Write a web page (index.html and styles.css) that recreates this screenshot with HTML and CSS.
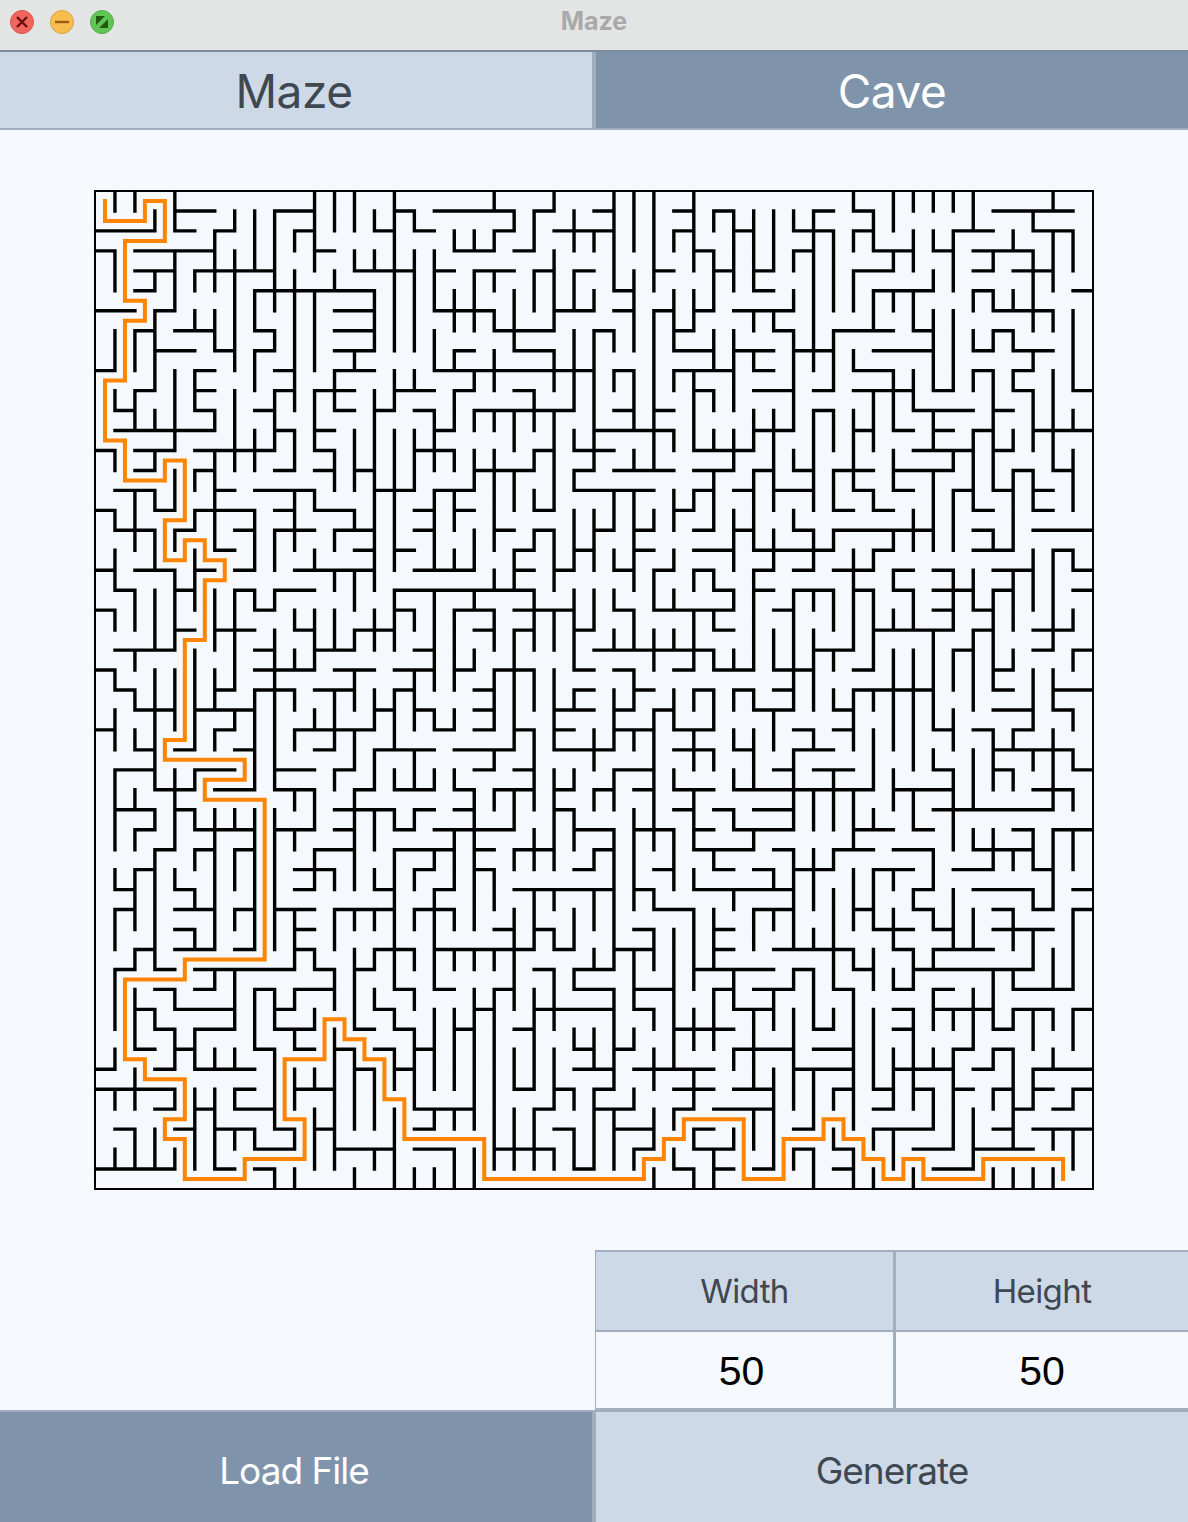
FILE: index.html
```html
<!DOCTYPE html>
<html lang="en">
<head>
  <meta charset="UTF-8" />
  <title>Maze</title>
  <link rel="stylesheet" href="styles.css">
</head>
<body>

  <!-- Title bar -->
  <div class="titlebar">
    <div class="lights">
      <svg class="light" viewBox="0 0 24 24"><circle class="light-close" cx="12" cy="12" r="11.5"/><path d="M7 7L17 17M17 7L7 17" stroke="#6a0e08" stroke-width="2.4" fill="none"/></svg>
      <svg class="light" viewBox="0 0 24 24"><circle class="light-min" cx="12" cy="12" r="11.5"/><path d="M5 12H19" stroke="#995b15" stroke-width="2.4" fill="none"/></svg>
      <svg class="light" viewBox="0 0 24 24"><circle class="light-max" cx="12" cy="12" r="11.5"/><path d="M6 6H15L6 15ZM18 18H9L18 9Z" fill="#1f5a12"/></svg>
    </div>
    <div class="title">Maze</div>
  </div>

  <!-- Tabs -->
  <div class="tabs">
    <div class="tab light-btn">Maze</div>
    <div class="tab dark-btn">Cave</div>
  </div>

  <!-- Maze -->
  <div class="maze-area">
    <svg class="maze" viewBox="-0.05 -0.05 50.1 50.1">
      <rect class="maze-frame" x="0" y="0" width="50" height="50"/>
      <path class="walls" d="
M4 1H6M9 1H11M15 1H16M17 1H21M22 1H23M25 1H26M29 1H30M31 1H32M36 1H37M38 1H39M45 1H49
M0 2H3M4 2H5M6 2H7M10 2H11M14 2H15M16 2H17M20 2H21M23 2H26M29 2H30M32 2H33M35 2H37M38 2H39M43 2H45M47 2H49
M0 3H1M2 3H6M11 3H12M18 3H20M21 3H22M30 3H31M35 3H36M39 3H41M42 3H43M44 3H47
M2 4H4M5 4H9M13 4H16M17 4H18M19 4H21M22 4H23M24 4H25M28 4H29M31 4H32M33 4H34M38 4H40M44 4H45M46 4H48
M2 5H3M8 5H14M26 5H27M33 5H34M39 5H42M44 5H45M49 5H50
M0 6H2M3 6H4M12 6H14M17 6H20M23 6H25M26 6H27M28 6H29M30 6H31M32 6H35M45 6H48
M2 7H3M4 7H6M8 7H9M12 7H14M20 7H23M25 7H26M29 7H30M34 7H35M37 7H40M41 7H42M45 7H46
M3 8H5M6 8H7M8 8H9M12 8H14M18 8H19M21 8H23M29 8H31M32 8H34M35 8H37M39 8H42M44 8H45M46 8H48
M0 9H1M5 9H6M9 9H10M12 9H14M17 9H25M26 9H27M29 9H32M33 9H34M38 9H40M44 9H45M46 9H47
M2 10H3M5 10H6M9 10H10M11 10H13M15 10H17M18 10H19M21 10H22M30 10H31M33 10H35M36 10H37M38 10H41M42 10H43M46 10H47M49 10H50
M1 11H2M5 11H6M8 11H9M12 11H13M14 11H15M16 11H17M19 11H24M26 11H27M28 11H29M36 11H37M41 11H44M45 11H46
M1 12H6M9 12H10M11 12H12M17 12H18M25 12H29M33 12H35M38 12H39M40 12H41M42 12H43M44 12H45M47 12H50
M0 13H1M2 13H4M5 13H9M11 13H12M16 13H18M22 13H23M24 13H26M30 13H33M41 13H44M45 13H46
M2 14H3M5 14H6M9 14H10M11 14H12M13 14H14M19 14H22M24 14H25M26 14H29M30 14H32M33 14H34M35 14H36M37 14H39M40 14H43M46 14H47M48 14H49
M1 15H3M6 15H7M8 15H11M14 15H16M17 15H19M24 15H28M30 15H31M32 15H33M34 15H36M38 15H39M40 15H41M43 15H44M45 15H46M47 15H48
M0 16H1M3 16H4M5 16H8M9 16H10M11 16H13M16 16H17M18 16H19M22 16H23M29 16H30M37 16H38M39 16H40M44 16H45M47 16H48
M1 17H3M4 17H5M7 17H8M9 17H11M12 17H14M16 17H17M20 17H21M22 17H23M25 17H26M27 17H28M30 17H31M32 17H33M35 17H36M37 17H42M44 17H45M47 17H50
M6 18H7M13 18H14M15 18H16M21 18H22M24 18H25M27 18H28M30 18H32M33 18H37M39 18H40M44 18H46M48 18H49
M0 19H1M2 19H4M5 19H6M7 19H8M10 19H14M16 19H19M21 19H22M23 19H24M26 19H27M28 19H29M30 19H31M33 19H34M35 19H36M37 19H39M40 19H41M42 19H43M45 19H47M49 19H50
M1 20H2M4 20H5M7 20H8M9 20H11M15 20H22M31 20H32M33 20H34M35 20H37M38 20H39M40 20H41M42 20H44M45 20H46M49 20H50
M0 21H1M8 21H9M15 21H16M18 21H20M21 21H24M26 21H27M28 21H32M34 21H35M42 21H43M44 21H45
M4 22H5M6 22H8M10 22H11M13 22H15M19 22H20M21 22H22M24 22H25M31 22H32M39 22H43M44 22H45M47 22H49
M1 23H4M8 23H9M11 23H13M16 23H17M25 23H31M36 23H38M43 23H44M47 23H48M49 23H50
M0 24H1M8 24H11M12 24H14M15 24H17M18 24H19M20 24H22M24 24H25M26 24H27M29 24H30M31 24H33M34 24H36M38 24H39M45 24H46
M1 25H2M6 25H7M8 25H10M11 25H13M15 25H16M19 25H20M24 25H25M27 25H28M30 25H31M32 25H33M34 25H35M38 25H42M45 25H46M48 25H50
M2 26H4M5 26H8M14 26H15M16 26H17M19 26H20M23 26H25M26 26H27M28 26H29M33 26H35M37 26H38M45 26H47M48 26H49
M0 27H1M6 27H7M10 27H14M17 27H18M19 27H20M21 27H22M23 27H24M26 27H28M29 27H31M35 27H36M37 27H38M42 27H43M44 27H45M46 27H47
M2 28H3M4 28H5M7 28H8M11 28H12M14 28H17M18 28H21M23 28H26M29 28H31M32 28H33M35 28H37M45 28H49
M1 29H3M5 29H7M9 29H11M12 29H13M19 29H20M21 29H22M26 29H28M34 29H35M36 29H38M42 29H43M45 29H46M49 29H50
M3 30H5M6 30H8M9 30H11M13 30H14M15 30H17M18 30H19M20 30H22M23 30H24M25 30H26M27 30H28M29 30H31M32 30H39M40 30H43M47 30H49
M1 31H3M4 31H5M12 31H15M16 31H17M18 31H19M23 31H24M29 31H30M31 31H32M33 31H35M42 31H48
M2 32H3M5 32H8M9 32H11M12 32H13M15 32H16M17 32H21M24 32H26M27 32H29M30 32H31M32 32H35M38 32H40M41 32H42M46 32H47M48 32H50
M3 33H4M5 33H6M7 33H8M11 33H13M15 33H18M19 33H20M21 33H23M25 33H26M30 33H33M34 33H35M37 33H39M40 33H42M44 33H47
M2 34H3M10 34H12M16 34H17M19 34H20M24 34H25M28 34H29M31 34H32M33 34H34M35 34H37M39 34H41M43 34H45M47 34H48
M1 35H2M4 35H5M10 35H11M14 35H15M17 35H18M21 35H26M27 35H28M30 35H35M41 35H42M44 35H47M49 35H50
M1 36H2M4 36H6M7 36H8M9 36H11M12 36H15M16 36H18M28 36H30M33 36H35M38 36H39M41 36H42M45 36H46M47 36H48M49 36H50
M4 37H5M10 37H11M20 37H21M22 37H23M27 37H28M31 37H32M39 37H41M42 37H43M45 37H48
M2 38H3M4 38H6M7 38H8M10 38H11M14 38H16M17 38H22M23 38H24M26 38H28M31 38H32M34 38H38M40 38H41M42 38H45
M1 39H2M3 39H4M5 39H10M11 39H12M13 39H14M22 39H23M24 39H26M30 39H34M35 39H36M38 39H39M41 39H47
M3 40H4M5 40H6M8 40H9M10 40H12M15 40H16M17 40H18M20 40H21M24 40H26M27 40H29M31 40H32M33 40H35M37 40H38M40 40H41M42 40H43M46 40H49
M2 41H3M4 41H7M9 41H10M14 41H15M19 41H20M22 41H26M27 41H28M32 41H34M40 41H41M42 41H45M46 41H48M49 41H50
M3 42H4M5 42H7M9 42H11M13 42H14M15 42H16M18 42H19M21 42H22M29 42H32M36 42H37M40 42H41M45 42H46
M2 43H3M4 43H5M8 43H9M10 43H11M12 43H13M14 43H15M16 43H17M24 43H25M26 43H27M32 43H35M36 43H38M43 43H44M45 43H46
M0 44H1M3 44H4M5 44H8M13 44H14M15 44H16M24 44H26M27 44H31M35 44H38M40 44H43M44 44H45M47 44H50
M0 45H4M7 45H8M10 45H12M21 45H22M23 45H24M25 45H26M29 45H31M32 45H34M37 45H38M39 45H40M41 45H42M43 45H44M45 45H46M47 45H48M49 45H50
M3 46H4M5 46H6M7 46H9M16 46H19M22 46H23M25 46H27M29 46H30M31 46H34M39 46H40M46 46H47M48 46H49
M1 47H2M4 47H5M6 47H8M9 47H10M11 47H12M16 47H17M23 47H24M26 47H28M30 47H31M35 47H36M39 47H42M45 47H46M47 47H50
M8 48H10M12 48H15M16 48H18M20 48H23M27 48H28M30 48H32M35 48H36M37 48H38M41 48H43M44 48H47
M0 49H4M6 49H7M8 49H9M24 49H25M29 49H30M31 49H32M33 49H34M37 49H38M42 49H44
M1 0V1M1 3V5M1 7V9M1 10V11M1 13V14M1 16V17M1 18V20M1 21V22M1 24V25M1 26V28M1 29V33M1 34V35M1 36V38M1 39V42M1 43V44M1 45V46M1 48V49
M2 0V1M2 7V9M2 10V12M2 15V18M2 20V22M2 23V24M2 25V26M2 27V28M2 30V31M2 32V33M2 34V37M2 38V39M2 40V43M2 44V46M2 47V49
M3 1V2M3 4V5M3 6V10M3 11V12M3 13V14M3 15V16M3 17V19M3 20V23M3 24V30M3 31V32M3 33V39M3 41V42M3 47V49
M4 0V2M4 3V6M4 9V13M4 14V16M4 17V18M4 19V23M4 24V27M4 29V33M4 34V35M4 40V41M4 42V44M4 45V46M4 48V49
M5 4V5M5 6V7M5 9V11M5 14V15M5 16V17M5 18V21M5 23V28M5 29V30M5 31V32M5 33V34M5 35V36M5 37V38M5 42V44M5 45V49
M6 2V5M6 6V8M6 11V12M6 13V18M6 20V23M6 24V26M6 27V28M6 31V38M6 39V40M6 43V44M6 45V49
M7 1V2M7 3V9M7 10V14M7 20V25M7 26V27M7 31V32M7 33V35M7 36V37M7 39V42M7 43V44M7 45V46M7 47V48
M8 1V4M8 5V7M8 8V10M8 12V14M8 16V19M8 20V21M8 25V30M8 31V38M8 40V43M8 47V48
M9 1V6M9 7V8M9 10V13M9 17V19M9 20V21M9 22V30M9 31V38M9 40V42M9 43V47M9 49V50
M10 2V3M10 4V11M10 12V14M10 15V18M10 21V22M10 23V24M10 25V26M10 27V28M10 30V31M10 32V33M10 36V39M10 40V41M10 42V43M10 44V46M10 47V48M10 49V50
M11 0V4M11 5V9M11 10V13M11 15V16M11 18V19M11 21V24M11 26V27M11 30V32M11 33V35M11 38V39M11 41V42M11 44V45M11 46V49
M12 0V2M12 4V5M12 9V11M12 13V15M12 17V18M12 19V20M12 21V23M12 25V28M12 29V30M12 34V35M12 36V38M12 39V41M12 42V49
M13 0V2M13 3V4M13 8V9M13 12V15M13 16V17M13 19V21M13 22V23M13 24V26M13 27V29M13 30V35M13 36V37M13 38V42M13 43V47M13 49V50
M14 1V2M14 3V4M14 5V8M14 10V20M14 21V23M14 25V27M14 28V30M14 31V33M14 34V35M14 36V37M14 38V39M14 40V41M14 44V47M14 48V49
M15 0V8M15 9V11M15 12V19M15 20V23M15 25V28M15 29V30M15 31V32M15 33V40M15 41V42M15 43V45M15 46V50
M16 1V2M16 3V8M16 9V10M16 12V15M16 21V22M16 24V27M16 28V30M16 31V32M16 34V35M16 36V37M16 38V39M16 40V41M16 42V46M16 49V50
M17 3V6M17 7V9M17 11V14M17 15V19M17 20V25M17 26V27M17 29V30M17 33V34M17 35V40M17 41V45M17 46V47M17 49V50
M18 2V3M18 5V7M18 8V9M18 10V12M18 13V14M18 15V17M18 18V19M18 21V25M18 26V27M18 29V30M18 32V35M18 36V37M18 38V39M18 41V45M18 46V47M18 48V50
M19 2V3M19 4V7M19 9V10M19 11V12M19 13V15M19 17V19M19 20V21M19 23V24M19 30V37M19 38V39M19 40V47M19 48V50
M20 0V1M20 2V3M20 4V5M20 6V7M20 8V10M20 11V12M20 13V18M20 19V20M20 21V23M20 24V27M20 28V29M20 30V31M20 34V36M20 38V39M20 40V49
M21 1V2M21 5V8M21 11V13M21 14V16M21 18V20M21 22V28M21 30V32M21 33V34M21 36V41M21 43V45M21 46V49
M22 1V3M22 4V6M22 10V12M22 13V14M22 15V16M22 17V18M22 20V23M22 24V26M22 27V31M22 32V34M22 35V38M22 40V45M22 46V49
M23 0V1M23 3V7M23 8V10M23 11V16M23 17V20M23 21V23M23 24V28M23 29V34M23 35V36M23 37V38M23 39V42M23 43V46M23 48V49
M24 1V3M24 4V6M24 7V11M24 12V13M24 14V15M24 16V19M24 20V24M24 25V26M24 29V30M24 31V33M24 36V38M24 39V40M24 42V43M24 45V46M24 47V49
M25 2V3M25 5V6M25 7V14M25 16V19M25 20V22M25 27V29M25 30V31M25 33V34M25 35V37M25 38V39M25 42V44M25 45V49
M26 0V5M26 7V8M26 9V10M26 15V17M26 18V19M26 20V21M26 22V23M26 25V28M26 29V31M26 32V39M26 40V45M26 46V49
M27 0V3M27 4V8M27 9V12M27 13V14M27 15V20M27 21V23M27 24V26M27 27V28M27 31V36M27 38V41M27 42V43M27 45V46M27 48V49
M28 0V5M28 6V14M28 16V17M28 19V21M28 22V24M28 26V33M28 35V36M28 37V39M28 41V42M28 43V45M28 46V48M28 49V50
M29 2V3M29 5V8M29 9V10M29 12V13M29 15V17M29 18V19M29 20V21M29 22V23M29 25V27M29 29V30M29 32V35M29 37V44M29 46V47M29 48V49
M30 0V4M30 5V7M30 9V13M30 15V16M30 19V20M30 21V24M30 25V26M30 27V29M30 30V33M30 34V35M30 36V40M30 41V43M30 44V46M30 47V48M30 49V50
M31 1V2M31 3V6M31 7V9M31 10V11M31 12V13M31 14V17M31 19V20M31 21V22M31 23V24M31 25V27M31 28V29M31 33V34M31 36V39M31 40V43M31 48V50
M32 1V5M32 7V11M32 12V14M32 16V19M32 20V21M32 23V24M32 25V26M32 27V28M32 29V30M32 31V32M32 35V36M32 39V41M32 43V44M32 47V48
M33 1V5M33 6V7M33 8V9M33 11V13M33 14V18M33 19V24M33 25V26M33 27V30M33 32V33M33 36V38M33 41V45M33 46V48
M34 1V4M34 6V7M34 11V16M34 17V19M34 22V24M34 26V28M34 34V35M34 36V37M34 40V42M34 44V49
M35 1V2M35 3V4M35 5V6M35 7V12M35 13V14M35 16V17M35 20V26M35 28V32M35 33V38M35 39V40M35 41V46M35 48V49
M36 1V9M36 11V16M36 17V19M36 20V21M36 22V26M36 27V28M36 30V32M36 33V36M36 37V38M36 39V42M36 44V47M36 48V50
M37 2V6M37 7V10M37 11V13M37 14V16M37 17V18M37 20V22M37 23V24M37 25V26M37 29V32M37 33V34M37 35V40M37 41V42M37 45V46M37 47V48
M38 0V1M38 2V3M38 4V6M38 8V9M38 11V15M38 18V23M38 25V28M38 30V33M38 34V37M38 38V39M38 40V47M38 48V50
M39 1V3M39 5V7M39 10V13M39 15V16M39 18V19M39 20V24M39 25V26M39 27V30M39 31V32M39 34V37M39 38V40M39 41V45M39 47V48M39 49V50
M40 0V2M40 3V4M40 5V6M40 9V12M40 13V15M40 17V18M40 19V20M40 21V22M40 23V28M40 29V31M40 34V35M40 36V38M40 39V40M40 43V46M40 47V49
M41 0V1M41 2V4M41 5V7M41 9V11M41 16V18M41 20V22M41 23V29M41 30V32M41 35V36M41 38V40M41 41V46M41 49V50
M42 0V1M42 2V3M42 4V5M42 6V10M42 11V13M42 14V18M42 22V27M42 28V29M42 33V35M42 36V37M42 38V39M42 40V42M42 43V44M42 45V47
M43 0V1M43 2V5M43 6V10M43 13V14M43 15V18M43 19V22M43 23V25M43 26V28M43 29V33M43 35V38M43 41V42M43 43V48
M44 0V2M44 5V6M44 7V8M44 9V10M44 12V16M44 19V21M44 22V26M44 28V31M44 32V33M44 36V38M44 40V43M44 46V49
M45 3V4M45 5V6M45 7V8M45 9V15M45 17V18M45 20V25M45 27V30M45 32V34M45 39V42M45 43V44M45 45V46M45 49V50
M46 2V3M46 5V6M46 7V8M46 9V10M46 12V13M46 14V18M46 19V22M46 23V24M46 27V28M46 29V30M46 33V34M46 36V38M46 39V40M46 41V42M46 43V48M46 49V50
M47 1V2M47 3V7M47 8V9M47 10V13M47 14V16M47 18V21M47 24V27M47 28V29M47 32V34M47 35V36M47 37V39M47 41V43M47 44V46M47 49V50
M48 0V1M48 2V5M48 6V7M48 9V14M48 18V23M48 24V26M48 27V31M48 32V36M48 38V40M48 41V42M48 43V44M48 47V48M48 49V50
M49 2V4M49 6V10M49 11V12M49 13V16M49 18V19M49 21V22M49 23V24M49 26V27M49 28V29M49 30V31M49 32V34M49 36V40M49 41V43M49 45V46M49 47V49
"/>
      <path class="solution" d="M.5 .4V1.5H2.5V.5H3.5V2.5H1.5V5.5H2.5V6.5H1.5V9.5H.5V12.5H1.5V14.5H3.5V13.5H4.5V16.5H3.5V18.5H4.5V17.5H5.5V18.5H6.5V19.5H5.5V22.5H4.5V27.5H3.5V28.5H7.5V29.5H5.5V30.5H8.5V38.5H4.5V39.5H1.5V43.5H2.5V44.5H4.5V46.5H3.5V47.5H4.5V49.5H7.5V48.5H10.5V46.5H9.5V43.5H11.5V41.5H12.5V42.5H13.5V43.5H14.5V45.5H15.5V47.5H19.5V49.5H27.5V48.5H28.5V47.5H29.5V46.5H32.5V49.5H34.5V47.5H36.5V46.5H37.5V47.5H38.5V48.5H39.5V49.5H40.5V48.5H41.5V49.5H44.5V48.5H48.5V49.6"/>
    </svg>
  </div>

  <!-- Size inputs -->
  <div class="controls">
    <div class="spacer"></div>
    <div class="size-table">
      <div class="size-head">Width</div>
      <div class="size-head">Height</div>
      <div class="size-value">50</div>
      <div class="size-value">50</div>
    </div>
  </div>

  <!-- Buttons -->
  <div class="actions">
    <div class="action dark-btn">Load File</div>
    <div class="action light-btn">Generate</div>
  </div>

</body>
</html>
```

FILE: styles.css
```css
html, body {
  margin: 0;
  height: 100%;
}

body {
  width: 1188px;
  height: 1522px;
  overflow: hidden;
  display: flex;
  flex-direction: column;
  font-family: Inter, 'Noto Sans', sans-serif;
  background-color: #f5f8fd;
}

.titlebar {
  height: 50px;
  flex: none;
  position: relative;
  display: flex;
  align-items: center;
  justify-content: center;
  background-color: #e3e5e4;
  border-bottom: 2px solid #7c8c9f;
}

.lights {
  position: absolute;
  left: 10px;
  top: 10px;
  display: flex;
  gap: 16px;
}

.light {
  display: block;
  width: 24px;
  height: 24px;
}

.light-close {
  fill: #f0665e;
  stroke: #d9534c;
}

.light-min {
  fill: #f8bd4f;
  stroke: #dd9f3e;
}

.light-max {
  fill: #61c554;
  stroke: #4fae44;
}

.title {
  font-size: 25px;
  font-weight: 700;
  color: #a9a9a9;
  margin-top: -8px;
}

.tabs {
  flex: none;
  display: grid;
  grid-template-columns: 1fr 1fr;
  gap: 4px;
  height: 76px;
  background-color: #a0aebf;
  border-bottom: 2px solid #a0aebf;
}

.tab {
  font-size: 46px;
  letter-spacing: -0.5px;
  padding-top: 2px;
  display: flex;
  align-items: center;
  justify-content: center;
}

.tab:first-child,
.action:first-child {
  padding-right: 4px;
}

.light-btn {
  background-color: #cdd9e7;
  color: #3f4750;
}

.dark-btn {
  background-color: #7f94aa;
  color: #ffffff;
}

.maze-area {
  flex: none;
  height: 1060px;
  padding: 60px 0 0 94px;
}

.maze {
  display: block;
  width: 1000px;
  height: 1000px;
}

.maze-frame {
  fill: none;
  stroke: #000;
  stroke-width: 0.1;
}

.walls {
  fill: none;
  stroke: #000;
  stroke-width: 0.17;
  stroke-linecap: square;
}

.solution {
  fill: none;
  stroke: #ff8400;
  stroke-width: 0.2;
}

.controls {
  flex: none;
  display: grid;
  grid-template-columns: 595px 1fr;
  height: 160px;
}

.size-table {
  display: grid;
  grid-template-columns: 297px 1fr;
  grid-template-rows: 78px 1fr;
  gap: 2px 3px;
  padding: 2px 0 2px 1px;
  background-color: #a0aebf;
}

.size-head {
  background-color: #cdd9e7;
  color: #3f4750;
  font-size: 33px;
  letter-spacing: -0.6px;
  display: flex;
  align-items: center;
  justify-content: center;
}

.size-value {
  background-color: #f5f8fd;
  color: #000;
  font-family: 'Liberation Sans', sans-serif;
  font-size: 41px;
  padding-right: 6px;
  padding-top: 2px;
  display: flex;
  align-items: center;
  justify-content: center;
}

.size-value:last-child {
  padding-right: 0;
}

.actions {
  flex: none;
  display: grid;
  grid-template-columns: 1fr 1fr;
  gap: 4px;
  height: 110px;
  border-top: 2px solid #a0aebf;
  background-color: #a0aebf;
}

.action {
  font-size: 37px;
  letter-spacing: -1px;
  padding-top: 6px;
  display: flex;
  align-items: center;
  justify-content: center;
}
```
